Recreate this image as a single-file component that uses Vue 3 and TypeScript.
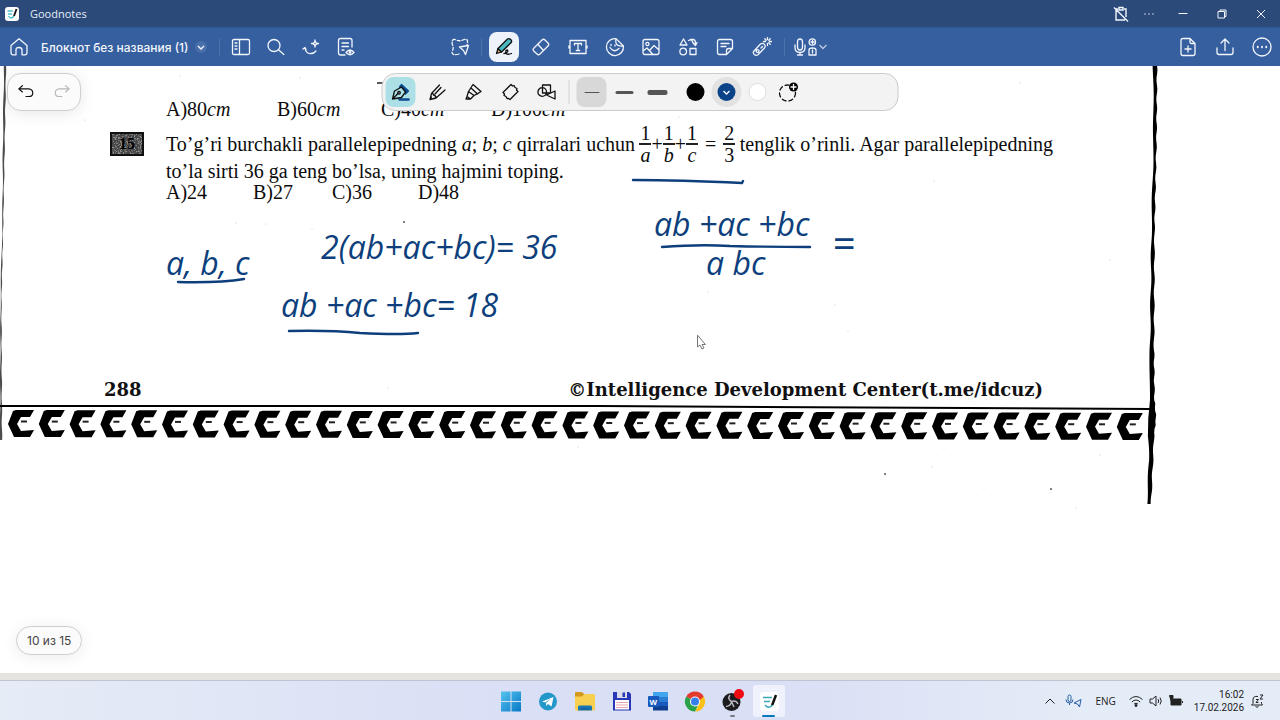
<script setup lang="ts">
import { ref } from 'vue'

interface Tool {
  id: string
  label: string
  d: string
}

const viewTools: Tool[] = [
  { id: 'sidebar', label: 'Боковая панель', d: 'M3 2.5H17Q18.500 2.5 18.500 4V16Q18.500 17.500 17 17.500H3Q1.500 17.500 1.500 16V4Q1.500 2.500 3 2.500ZM8.500 2.500V17.500M4 6H6M4 9H6M4 12H6' },
  { id: 'search', label: 'Поиск', d: 'M14 8.500A6 6 0 1 1 2 8.500A6 6 0 1 1 14 8.500ZM12.500 12.800L17.800 17.500' },
  { id: 'assist', label: 'Помощник', d: 'M2 12L4 10.500L5 12.500M4 11Q5 17 10 16.500Q13 16.500 15 14M14 3Q14 6.500 17.500 6.500Q14 6.500 14 10Q14 6.500 10.500 6.500Q14 6.500 14 3Z' },
  { id: 'review', label: 'Режим чтения', d: 'M9 18H4.500Q2.500 18 2.500 16V3.500Q2.500 1.500 4.500 1.500H14Q16 1.500 16 3.500V10M6 6H12.500M6 9.500H12.500M6 13H8M10 15.500Q14 10.500 18 15.500Q14 20 10 15.500ZM14.800 15.300A.8 .8 0 1 1 13.200 15.300A.8 .8 0 1 1 14.800 15.300' },
]

const insertTools: Tool[] = [
  { id: 'eraser', label: 'Ластик', d: 'M2.500 11.500L11 3Q12.500 1.500 14 3L17 6Q18.500 7.500 17 9L9 17Q7.500 18.500 6 17L2.500 13.800Q1.500 12.500 2.500 11.500ZM7 7.500L12.500 13.500' },
  { id: 'text', label: 'Текст', d: 'M2 7.500V3.500H18V7.500M18 12.500V16.500H2V12.500M2 8.500V11.500M18 8.500V11.500M1 9V11M19 9V11M6.500 8V6.500H13.500V8M10 6.500V13.500M8.300 13.500H11.700' },
  { id: 'sticker', label: 'Стикеры', d: 'M11 1.600A8.500 8.500 0 1 0 18.400 9ZM11 1.600Q10 7 13 8.300Q15 9.500 18.400 9M5 10.500Q9 16.500 14 11.500M6 7.500V8.500M10 8V9' },
  { id: 'image', label: 'Изображение', d: 'M4 2.500H16Q18 2.500 18 4.500V15.500Q18 17.500 16 17.500H4Q2 17.500 2 15.500V4.500Q2 2.500 4 2.500ZM8 7A1.600 1.600 0 1 1 4.800 7A1.600 1.600 0 1 1 8 7ZM2 14L6 11L12 17.500M8.500 13.500L13 8.500L18 13' },
  { id: 'shapes', label: 'Элементы', d: 'M5.500 2L9 8H2ZM8.500 14.500A3.300 3.300 0 1 1 1.900 14.500A3.300 3.300 0 1 1 8.500 14.500ZM12 11.500H18V17.500H12ZM10.500 3.500Q13 2 14.500 4.500Q15 6.500 16.500 7M12.500 2.500H15Q17.500 2.500 17.500 6.500M15 6L17.500 8.500L19 5.500' },
  { id: 'note', label: 'Заметка', d: 'M11.500 17.500H4.500Q2.500 17.500 2.500 15.500V4.500Q2.500 2.500 4.500 2.500H15.500Q17.500 2.500 17.500 4.500V11.500ZM17.500 11.500H13.500Q11.500 11.500 11.500 13.500V17.500M6 6.500H14M6 9.500H11' },
  { id: 'laser', label: 'Лазерная указка', d: 'M2 14L8.500 7Q10.500 5.500 12.500 7.300Q14 9.500 12.500 11L6 17.800Q4 19 2.300 17.500Q.5 15.700 2 14ZM7 14A1.400 1.400 0 1 1 4.200 14A1.400 1.400 0 1 1 7 14ZM9 11L10.500 9.500M15.500 .5V2.500M15.500 6.500V8.500M11.500 4.500H13.500M17.500 4.500H19.500M12.800 1.800L14.200 3.200M16.800 5.800L18.200 7.200M18.200 1.800L16.800 3.200' },
]

const pageTools: Tool[] = [
  { id: 'add', label: 'Добавить страницу', d: 'M12 1.500H5Q3 1.500 3 3.500V16.500Q3 18.500 5 18.500H15Q17 18.500 17 16.500V6.500ZM12 1.500V5Q12 6.500 13.500 6.500H17M10 9V15M7 12H13' },
  { id: 'share', label: 'Поделиться', d: 'M2 11V15.500Q2 17.500 4 17.500H16Q18 17.500 18 15.500V11M10 13.500V2M6 6L10 2L14 6' },
  { id: 'more', label: 'Ещё', d: 'M19 10A9 9 0 1 1 1 10A9 9 0 1 1 19 10ZM5.500 9.500V10.500M6 9.500V10.500M9.800 9.500V10.500M10.200 9.500V10.500M14 9.500V10.500M14.500 9.500V10.500' },
]

const penTools: Tool[] = [
  { id: 'pencil', label: 'Карандаш', d: 'M2.500 17.500L4 11.500L12 3M2.500 17.500L8.500 16L17.500 8M4 11.500Q5.500 11 6 13Q8.500 13.500 8.500 16M7.500 12L13.500 5.500M2.500 17.500L4 15' },
  { id: 'marker', label: 'Маркер', d: 'M2.500 17H7L3.500 14.500ZM3.500 14.500L5 9.500L10.500 13.500L7 17M5 9.500L9.500 2.500L17.500 9.500Q14 12 10.500 13.500M7.500 6L14 12' },
  { id: 'tape', label: 'Лента', d: 'M10.500 2.500L12 4L13.500 3.500L14.500 5.500L16.500 6.500L16 8L17.500 9.500L9.500 17.500L8 16.500L6.500 16.500L5.500 14.500L3.500 13.500L4 12L2.500 10.500Z' },
  { id: 'shape', label: 'Фигуры', d: 'M10 10A4.300 4.300 0 1 1 1.400 10A4.300 4.300 0 1 1 10 10ZM6 3H14V11H6ZM18.500 9V17L10 13Z' },
]

const widths = [1, 3, 5]
const pickedWidth = ref(1)
const copies = Array.from({ length: 37 }, (_, i) => i)

const specks = [
  [236, 223, 1], [266, 224, 1], [404, 222, 2], [312, 229, 1], [388, 388, 1], [885, 474, 2],
  [1051, 489, 2], [984, 488, 1], [944, 448, 1], [932, 467, 1], [578, 447, 1], [679, 117, 1],
  [704, 211, 1], [835, 305, 1], [848, 331, 1], [934, 181, 1], [1100, 455, 1], [85, 120, 1],
  [180, 76, 1], [300, 78, 1], [1020, 83, 1], [1110, 260, 1], [1076, 508, 1], [708, 292, 1],
]

/** Ragged outline of a worn vertical rule running through the given centre points. */
function ragged(points: number[][], wear: number): string {
  const left: string[] = []
  const right: string[] = []
  for (let i = 0; i < points.length - 1; i++) {
    const [x0, y0, w0] = points[i]
    const [x1, y1, w1] = points[i + 1]
    const n = Math.max(1, Math.round((y1 - y0) / 4))
    for (let k = 0; k <= n; k++) {
      const t = k / n
      const x = x0 + (x1 - x0) * t
      const y = y0 + (y1 - y0) * t
      const w = w0 + (w1 - w0) * t
      left.push(`${x - w / 2 + Math.sin(y * 1.7) * wear},${y}`)
      right.unshift(`${x + w / 2 + Math.sin(y * 2.9) * wear},${y}`)
    }
  }
  return [...left, ...right].join(' ')
}
const rightRule = ragged([[1155, 66, 4], [1155, 140, 3], [1153, 230, 3], [1152, 350, 4], [1152, 400, 5], [1152, 418, 8], [1151, 436, 6], [1151, 460, 4], [1149, 504, 4]], 0.5)
const leftRule = ragged([[5, 66, 2], [4, 130, 2], [3, 210, 1], [1, 300, 1], [1, 440, 2]], 0.3)
</script>

<template>
  <div class="app">
    <header class="titlebar">
      <div class="brand">
        <svg class="logo" viewBox="0 0 14 14"><rect width="14" height="14" rx="3" fill="#fff" /><path d="M2.500 4H8M3 7H7M3.500 9Q6 13 9 9" stroke="#4fc3cc" fill="none" stroke-width="1.300" /><path d="M11.500 2L9 9" stroke="#111" stroke-width="1.800" /></svg>
        <span>Goodnotes</span>
      </div>
      <div class="window-buttons">
        <button aria-label="Буфер обмена"><svg class="wi" viewBox="0 0 16 16"><path d="M5 3H3V14H12M11 3H13V11M6 1.500H10V4H6ZM1 1.500L15 15.500" /></svg></button>
        <button aria-label="Ещё"><svg class="wi" viewBox="0 0 16 16"><path d="M4 7.500V8.500M8 7.500V8.500M12 7.500V8.500" /></svg></button>
        <button aria-label="Свернуть"><svg class="wi thin" viewBox="0 0 16 16"><path d="M3.500 7.500H12.500" /></svg></button>
        <button aria-label="Восстановить"><svg class="wi thin" viewBox="0 0 16 16"><path d="M4 5.500H10.500V12H4ZM6 5V4H12V10.500H11" /></svg></button>
        <button aria-label="Закрыть"><svg class="wi thin" viewBox="0 0 16 16"><path d="M4 4L12 12M12 4L4 12" /></svg></button>
      </div>
    </header>

    <nav class="toolbar">
      <div class="bar-left">
        <button class="tool" aria-label="Главная"><svg class="icon" viewBox="0 0 20 20"><path d="M2 8.500L10 1.800L18 8.500V15.500Q18 17.800 16 17.800H13V13Q13 10.500 10 10.500Q7 10.500 7 13V17.800H4Q2 17.800 2 15.500Z" /></svg></button>
        <button class="doc-name">Блокнот без названия (1)<svg class="chev round" viewBox="0 0 12 12"><path d="M3 5L6 8L9 5" /></svg></button>
        <i class="divider"></i>
        <div class="view-tools">
          <button v-for="t in viewTools" :key="t.id" class="tool" :aria-label="t.label"><svg class="icon" viewBox="0 0 20 20"><path :d="t.d" /></svg></button>
        </div>
      </div>
      <div class="bar-center">
        <button class="tool slim" aria-label="Лассо"><svg class="icon" viewBox="0 0 20 20"><path stroke-dasharray="3 2" d="M9 17Q2 19 2 15Q4 11 2.500 8Q1 2 5 2.500Q10 5 14 2.500Q19 1 17 8" /><path d="M9.500 10L18.500 8.500L15.500 17.500L13.500 13.500Z" /></svg></button>
        <i class="divider"></i>
        <button class="tool selected" aria-label="Перо" aria-pressed="true"><svg class="icon pen" viewBox="0 0 20 20"><path d="M2.500 16.500L4 11.500L7.500 15Z" fill="#d9a066" /><path d="M4 11.500L13.500 2Q15 1 16.500 2.300Q18.500 4 17 5.800L7.500 15Z" fill="#49b9c2" /><path d="M10 16.500Q15 15.500 13.500 13Q11 13 12 16.500Q14 18 17.500 16.500" /></svg></button>
        <button v-for="t in insertTools" :key="t.id" class="tool" :aria-label="t.label"><svg class="icon" viewBox="0 0 20 20"><path :d="t.d" /></svg></button>
        <i class="divider"></i>
        <button class="record" aria-label="Запись">
          <svg class="icon record-icon" viewBox="0 0 24 20"><path d="M4.500 5Q4.500 2 7 2Q9.500 2 9.500 5V10Q9.500 13 7 13Q4.500 13 4.500 10ZM2 8V10.500Q2 15.500 7 15.500Q12 15.500 12 10.500V8M7 15.500V18M4.500 18H9.500M22.500 5A3.200 3.200 0 1 1 16.100 5A3.200 3.200 0 1 1 22.500 5ZM18 5H21M19.500 3.500V6.500M16 18V13Q16 11 19.500 11Q23 11 23 13V18ZM19.500 13V16" /></svg>
          <svg class="chev faint" viewBox="0 0 12 12"><path d="M2.500 4L6 7.500L9.500 4" /></svg>
        </button>
      </div>
      <div class="bar-right">
        <button v-for="t in pageTools" :key="t.id" class="tool" :aria-label="t.label"><svg class="icon" viewBox="0 0 20 20"><path :d="t.d" /></svg></button>
      </div>
    </nav>

    <main class="canvas">
      <svg class="layer" viewBox="0 66 1280 607" width="1280" height="607" aria-hidden="true">
        <defs>
          <polygon id="mark" points="0,14 5,1 8,0 26,0 22,7 13,7 9,14 13,21 26,20 22,27 6,27" />
          <filter id="grain" x="0" y="0" width="100%" height="100%">
            <feTurbulence type="fractalNoise" baseFrequency="0.7" numOctaves="2" seed="4" />
            <feColorMatrix values="0 0 0 0 0.6  0 0 0 0 0.6  0 0 0 0 0.6  5 0 0 0 -2.4" />
          </filter>
        </defs>
        <polygon :points="leftRule" opacity="0.7" />
        <polygon :points="rightRule" />
        <path d="M0 406H600L1150 409" stroke="#000" stroke-width="2" fill="none" />
        <g v-for="i in copies" :key="i" :transform="`translate(${8 + i * 30.8} ${410 + i * 0.08})`">
          <use href="#mark" />
          <path d="M13 11.500H19" stroke="#222" stroke-width="2" />
        </g>
        <path d="M377 83H384" stroke="#222" stroke-width="1.500" />
        <circle v-for="(s, i) in specks" :key="i" :cx="s[0]" :cy="s[1]" :r="s[2] / 2" :fill="s[2] > 1 ? '#555' : '#bbb'" />
        <rect x="110" y="132" width="34" height="24" fill="#444" />
        <rect x="110" y="132" width="34" height="24" filter="url(#grain)" opacity="0.6" />
        <rect x="111" y="133" width="32" height="22" fill="none" stroke="#111" stroke-width="2" />
      </svg>

      <article class="sheet">
        <ul class="options wide"><li>A)80<i>cm</i></li><li>B)60<i>cm</i></li><li>C)40<i>cm</i></li><li>D)100<i>cm</i></li></ul>
        <section class="problem">
          <b class="number">15</b>
          <div class="body">
            <div class="statement">
              <span>To’g’ri burchakli parallelepipedning <i>a</i>; <i>b</i>; <i>c</i> qirralari uchun</span>
              <span class="formula">
                <span class="frac"><span>1</span><i>a</i></span>+<span class="frac"><span>1</span><i>b</i></span>+<span class="frac"><span>1</span><i>c</i></span><span class="eq">=</span><span class="frac"><span>2</span><span>3</span></span>
              </span>
              <span>tenglik o’rinli. Agar parallelepipedning</span>
            </div>
            <div class="second">to’la sirti 36 ga teng bo’lsa, uning hajmini toping.</div>
            <ul class="options"><li>A)24</li><li>B)27</li><li>C)36</li><li>D)48</li></ul>
          </div>
        </section>
        <footer class="sheet-foot"><span>288</span><span>©Intelligence Development Center(t.me/idcuz)</span></footer>
      </article>

      <svg class="layer ink" viewBox="0 66 1280 607" width="1280" height="607">
        <g class="writing">
          <text x="166" y="275">a, b, c</text>
          <text x="321" y="259">2(ab+ac+bc)= 36</text>
          <text x="281" y="317">ab +ac +bc= 18</text>
          <text x="654" y="236">ab +ac +bc</text>
          <text x="706" y="275">a bc</text>
          <text class="big" x="832" y="258">=</text>
        </g>
        <path d="M178 282Q220 283 244 279M289 331Q330 330 360 333Q400 335 418 333M633 180Q680 180 742 183L743 181M662 247Q700 244 730 246Q770 247 810 247" />
        <path class="cursor" d="M697.500 335.500V347L700 345L702 349L704 348L702 344.500H705Z" />
      </svg>

      <div class="history">
        <button aria-label="Отменить"><svg class="icon" viewBox="0 0 20 20"><path d="M6 3L2 6.500L6 10M2 6.500H13Q17.500 7 17.500 11Q17.500 15 13 15H10" /></svg></button>
        <button aria-label="Повторить" disabled><svg class="icon" viewBox="0 0 20 20"><path d="M14 3L18 6.500L14 10M18 6.500H7Q2.500 7 2.500 11Q2.500 15 7 15H10" /></svg></button>
      </div>

      <div class="penbar">
        <div class="pens">
          <button class="pen-tool active" aria-label="Перьевая ручка" aria-pressed="true"><svg class="icon" viewBox="0 0 20 20"><path d="M9 17.500H18" stroke="#0b4a8f" stroke-width="2.500" /><path d="M11 2.500L18 9L15 12L9 5Z" fill="#0b4a8f" stroke="#0b4a8f" /><path d="M2 17L4 9L11 5L15 10L11 15.500ZM2 17L7.500 11.500" fill="#addfe6" /><circle cx="8.500" cy="10.800" r="1.300" /></svg></button>
          <button v-for="t in penTools" :key="t.id" class="pen-tool" :aria-label="t.label"><svg class="icon" viewBox="0 0 20 20"><path :d="t.d" /></svg></button>
        </div>
        <i class="divider dark"></i>
        <div class="strokes">
          <button v-for="w in widths" :key="w" class="stroke" :class="{ active: w === pickedWidth }" :aria-label="`Толщина ${w}`" @click="pickedWidth = w"><span :class="`line w${w}`"></span></button>
        </div>
        <div class="colors">
          <button class="swatch" aria-label="Чёрный"><span class="dot black"></span></button>
          <button class="swatch active" aria-label="Синий" aria-pressed="true"><span class="dot blue"><svg class="chev" viewBox="0 0 12 12"><path d="M3 5L6 8L9 5" /></svg></span></button>
          <button class="swatch" aria-label="Белый"><span class="dot white"></span></button>
          <button class="swatch" aria-label="Добавить цвет"><svg class="icon" viewBox="0 0 20 20"><circle cx="9" cy="11" r="8" stroke-dasharray="4 3" /><circle cx="15" cy="5" r="4.500" fill="#000" stroke="none" /><path d="M15 2.500V7.500M12.500 5H17.500" stroke="#fff" /></svg></button>
        </div>
      </div>

      <div class="page-count">10 из 15</div>
    </main>

    <div class="sill"></div>
    <footer class="taskbar">
      <span></span>
      <div class="apps">
        <button aria-label="Пуск"><svg viewBox="0 0 24 24"><defs><linearGradient id="win" x2="1" y2="1"><stop stop-color="#55c4ef" /><stop offset="1" stop-color="#0878c6" /></linearGradient></defs><path fill="url(#win)" d="M2 2.500H11.500V12H2ZM12.500 2.500H22V12H12.500ZM2 13H11.500V22.500H2ZM12.500 13H22V22.500H12.500Z" /></svg></button>
        <button aria-label="Telegram"><svg viewBox="0 0 24 24"><circle cx="12" cy="12.500" r="9" fill="#2297c9" /><path fill="#fff" d="M6 12.500L17.500 8L15.500 17.500L12 15L10 17V14L15 9.500L9 13.500Z" /></svg></button>
        <button aria-label="Проводник"><svg viewBox="0 0 24 24"><path fill="#d49a20" d="M2 4Q2 3 3 3H9L11 5V10H2Z" /><path fill="#f7cf51" d="M2 7.500H9L11.500 5H21Q22 5 22 6V20Q22 21.500 20.500 21.500H3.500Q2 21.500 2 20Z" /><path fill="#1976b5" d="M5 21.500V18Q5 16.500 6.500 16.500H17.500Q19 16.500 19 18V21.500Z" /><path fill="#1260a0" d="M8 19H16V20.500H8Z" /></svg></button>
        <button aria-label="Файловый менеджер"><svg viewBox="0 0 24 24"><path fill="#2836b8" d="M3 3H19L21 5V21.500H3Z" /><path fill="#d9dce8" d="M7 3H17V9H7Z" /><path fill="#2836b8" d="M12.500 3.500H15V8H12.500Z" /><path fill="#fff" d="M5 11H19V20.500H5Z" /><path stroke="#e8a5b0" d="M6 13.500H18M6 16H18M6 18.500H18" /></svg></button>
        <button aria-label="Word"><svg viewBox="0 0 24 24"><path fill="#41a5ee" d="M7 3H22V8H7Z" /><path fill="#2b7cd3" d="M7 8H22V13H7Z" /><path fill="#185abd" d="M7 13H22V17H7Z" /><path fill="#103f91" d="M7 17H22V21.500H7Z" /><rect x="2" y="7" width="11" height="11" rx="1" fill="#185abd" /><text x="3.500" y="15.500" class="word">W</text></svg></button>
        <button aria-label="Chrome"><svg viewBox="0 0 24 24"><path fill="#e33b2e" d="M12 12.500L3.300 7.500A10 10 0 0 1 20.700 7.500Z" /><path fill="#2aa14b" d="M12 12.500L3.300 7.500A10 10 0 0 0 12 22.500Z" /><path fill="#fbc116" d="M12 12.500L20.700 7.500A10 10 0 0 1 12 22.500L16 15Z" /><path fill="#e33b2e" d="M11 7.500H20.700L16 12Z" /><path fill="#2aa14b" d="M3.300 7.500L8 15L12 17L14.500 17L12 22.500Z" /><circle cx="12" cy="12.500" r="5" fill="#fff" /><circle cx="12" cy="12.500" r="4" fill="#367ee9" /></svg></button>
        <button class="running" aria-label="OBS Studio"><svg viewBox="0 0 24 24"><circle cx="11.500" cy="13" r="9" fill="#1c1b1e" /><path d="M10 6Q7 10 11.500 12.500Q16 11 18 15M11.500 12.500Q11 17 6 17.500M11.500 12.500L14 18" fill="none" stroke="#b9bac2" stroke-width="1.500" /><circle cx="19" cy="5" r="5" fill="#f00b13" /></svg></button>
        <button class="running current" aria-label="Goodnotes"><svg viewBox="0 0 24 24"><rect x="3" y="3" width="19" height="19" rx="4" fill="#fff" /><path d="M6 8.500H15M7 12.500H13M8 16Q12 21 16 15" stroke="#38a9b4" stroke-width="1.500" fill="none" /><path d="M19 6L16 14L15 16" stroke="#111" stroke-width="2.500" fill="none" /></svg></button>
      </div>
      <div class="tray">
        <button aria-label="Скрытые значки"><svg class="ti" viewBox="0 0 16 16"><path d="M3.500 10.500L8 6L12.500 10.500" /></svg></button>
        <button class="gap" aria-label="Микрофон и геопозиция"><svg class="ti duo" viewBox="0 0 20 16"><path d="M5 3.500Q5 2 6.500 2Q8 2 8 3.500V7Q8 8.500 6.500 8.500Q5 8.500 5 7ZM3 6.500Q3 10 6.500 10Q10 10 10 6.500M6.500 10V12M11 10L18 6.500L16.500 14L14.500 11Z" /></svg></button>
        <button class="lang">ENG</button>
        <button class="status" aria-label="Сеть, звук и батарея">
          <svg class="ti" viewBox="0 0 16 16"><path d="M1.500 6.500Q8 .5 14.500 6.500M3.800 9Q8 5 12.200 9M6 11Q8 9.500 10 11" /><circle cx="8" cy="12.500" r="1" fill="#222" /></svg>
          <svg class="ti" viewBox="0 0 16 16"><path d="M2 6H4.500L8 3V13L4.500 10H2ZM10 6Q11.500 8 10 10M12 4.500Q14.500 8 12 11.500" /></svg>
          <svg class="ti" viewBox="0 0 16 16"><path fill="#222" d="M3 6H13V12H3ZM14.500 8V10M1.500 2.500H5V5L3 7.500Z" /></svg>
        </button>
        <div class="clock"><time>16:02</time><time>17.02.2026</time></div>
        <button aria-label="Уведомления"><svg class="ti" viewBox="0 0 16 16"><path d="M9 3.500Q4 2.500 4 7V10.500L2.500 12H13.500L12.500 10.500V9M6.500 13.500Q8 15 9.500 13.500M7 6.500H9.500L7 9.500H9.500M11 2H14L11 6H14" /></svg></button>
      </div>
    </footer>
  </div>
</template>

<style>
body { margin: 0; }
</style>

<style scoped>
* { box-sizing: border-box; }
.app { display: flex; flex-direction: column; height: 100vh; overflow: hidden; background: #fff; color: #111; font-family: "Open Sans", "Noto Sans", sans-serif; }
button { display: flex; align-items: center; justify-content: center; padding: 0; border: 0; background: none; color: inherit; font: inherit; flex: none; }
ul { list-style: none; margin: 0; padding: 0; }
svg { display: block; flex: none; }

.titlebar { display: flex; justify-content: space-between; align-items: center; height: 27px; flex: none; padding: 0 0 0 5px; background: #2b4a7a; color: #e8eef7; font-size: 11px; }
.brand { display: flex; align-items: center; gap: 11px; }
.logo { width: 14px; height: 14px; }
.window-buttons { display: flex; }
.window-buttons button { width: 39px; height: 27px; }
.window-buttons button:nth-child(-n+2) { width: 28px; }
.wi { width: 16px; height: 16px; fill: none; stroke: #f2f6fb; stroke-width: 1.4; }
.thin { stroke-width: 1; }

.toolbar { display: grid; grid-template-columns: 1fr 380px 1fr; align-items: center; height: 39px; flex: none; background: #365f9f; border-top: 1px solid #315794; color: #f2f6fc; }
.bar-left, .bar-center, .bar-right, .view-tools { display: flex; align-items: center; }
.bar-left { padding-left: 4px; }
.bar-center { justify-content: space-between; }
.bar-right { justify-content: flex-end; gap: 7px; padding-right: 3px; }
.view-tools { gap: 5px; padding-left: 6px; }
.tool { width: 30px; height: 30px; border-radius: 8px; }
.slim { width: 20px; }
.selected { background: #eef2fb; }
.icon { width: 20px; height: 20px; fill: none; stroke: currentColor; stroke-width: 1.3; stroke-linecap: round; stroke-linejoin: round; }
.pen { color: #111; }
.doc-name { gap: 6px; padding-left: 7px; font: 500 12px Inter, "Open Sans", sans-serif; }
.chev { width: 12px; height: 12px; fill: none; stroke: currentColor; stroke-width: 1.3; }
.round { border-radius: 6px; background: #4a70ab; }
.faint { opacity: 0.7; }
.divider { width: 1px; height: 18px; background: #4b70aa; }
.bar-left .divider { margin-left: 12px; }
.slim + .divider { margin-left: 4px; }
.dark { height: 24px; background: #d2d2d2; }
.record-icon { width: 24px; }
.record { width: 38px; }

.canvas { position: relative; flex: 1; min-height: 0; overflow: hidden; background: #fff; }
.layer { position: absolute; top: 0; left: 0; }
.sheet { position: relative; max-width: 1158px; padding: 32px 104px 0; color: #0c0c0c; font: 20px/22px "Liberation Serif", serif; }
.options { display: grid; grid-template-columns: 87px 79px 86px auto; }
.wide { grid-template-columns: 111px 104px 110px auto; padding: 0 0 7px 62px; }
.problem { display: grid; grid-template-columns: 34px 1fr; column-gap: 22px; padding-left: 6px; }
.number { font-size: 16px; line-height: 34px; text-align: center; color: #000; }
.body { white-space: nowrap; }
.statement { display: flex; justify-content: space-between; align-items: center; height: 34px; max-width: 887px; }
.formula { display: flex; align-items: center; }
.frac { display: grid; text-align: center; min-width: 12px; line-height: 20px; }
.frac > :first-child { border-bottom: 2px solid #222; }
.eq { padding: 0 7px; }
.second { line-height: 20px; }
.sheet-foot { display: flex; justify-content: space-between; padding: 176px 11px 0 0; font: bold 18px/22px "DejaVu Serif", serif; color: #111; }

.ink { fill: none; stroke: #0d3f7c; stroke-width: 2.4; stroke-linecap: round; }
.writing { fill: #0d3f7c; stroke: none; font: italic 32px "Open Sans", "Noto Sans", sans-serif; }
.big { font-size: 40px; }
.cursor { fill: #fff; stroke: #777; stroke-width: 1; }

.history { position: absolute; left: 7px; top: 7px; display: flex; align-items: center; gap: 6px; height: 38px; padding: 0 3px; border: 1px solid #cfcfcf; border-radius: 14px; background: #fbfbfb; box-shadow: 0 2px 16px #0000001a; color: #111; }
.history button { width: 30px; height: 30px; }
.history .icon { width: 18px; height: 18px; }
.history button:disabled { color: #b8b8b8; }
.penbar { position: absolute; left: 50%; top: 7px; transform: translateX(-50%); display: flex; align-items: center; width: 517px; height: 38px; padding: 0 3px; border: 1px solid #cbcbcb; border-radius: 14px; background: #f3f3f3; color: #111; }
.pens { display: flex; justify-content: space-between; width: 176px; margin-right: 7px; }
.pen-tool, .stroke, .swatch { width: 30px; height: 30px; border-radius: 8px; }
.pen-tool.active { background: #addfe6; }
.strokes { display: flex; gap: 3px; margin: 0 8px 0 7px; }
.stroke.active { background: #d8d8d8; }
.line { width: 18px; background: #555; border-radius: 2px; }
.w1 { width: 15px; height: 1px; }
.w3 { height: 3px; }
.w5 { width: 20px; height: 5px; }
.colors { display: flex; gap: 1px; }
.swatch { border-radius: 15px; }
.swatch.active { background: #e2e2e2; }
.dot { display: flex; align-items: center; justify-content: center; width: 18px; height: 18px; border-radius: 9px; color: #fff; }
.black { background: #000; }
.blue { background: #0b4389; }
.white { background: #fff; border: 1px solid #dedede; }
.page-count { position: absolute; left: 16px; bottom: 18px; padding: 0 10px; border: 1px solid #cfcfcf; border-radius: 15px; background: #fbfbfb; box-shadow: 0 2px 16px #00000014; color: #444; font: 12px/27px Inter, sans-serif; }

.sill { height: 7px; flex: none; background: #e6e4e1; }
.taskbar { display: grid; grid-template-columns: 1fr 290px 1fr; align-items: center; height: 40px; flex: none; border-top: 1px solid #bfc3d2; background: linear-gradient(90deg, #e5ecf6, #d9dff5 40%, #d9dff5 60%, #e4ecf7 85%); color: #222; }
.apps { display: flex; justify-content: space-between; }
.apps button { position: relative; width: 32px; height: 32px; border-radius: 3px; }
.apps svg { width: 24px; height: 24px; }
.word { fill: #fff; font: bold 8px "Liberation Sans", sans-serif; }
.current { background: #eff2fc; }
.running::after { content: ""; position: absolute; bottom: 0; width: 5px; height: 2px; border-radius: 1px; background: #777b88; }
.current::after { width: 13px; background: #0878ba; }
.tray { display: flex; align-items: center; justify-content: flex-end; padding-right: 15px; font-size: 10px; }
.ti { width: 16px; height: 16px; fill: none; stroke: #222; stroke-width: 1; }
.duo { width: 20px; stroke: #245ea8; }
.gap { margin-left: 5px; }
.lang { margin-left: 12px; }
.status { gap: 4px; margin: 0 10px 0 12px; }
.clock { display: grid; text-align: right; line-height: 13px; margin-right: 5px; font-family: Roboto, sans-serif; }
</style>
